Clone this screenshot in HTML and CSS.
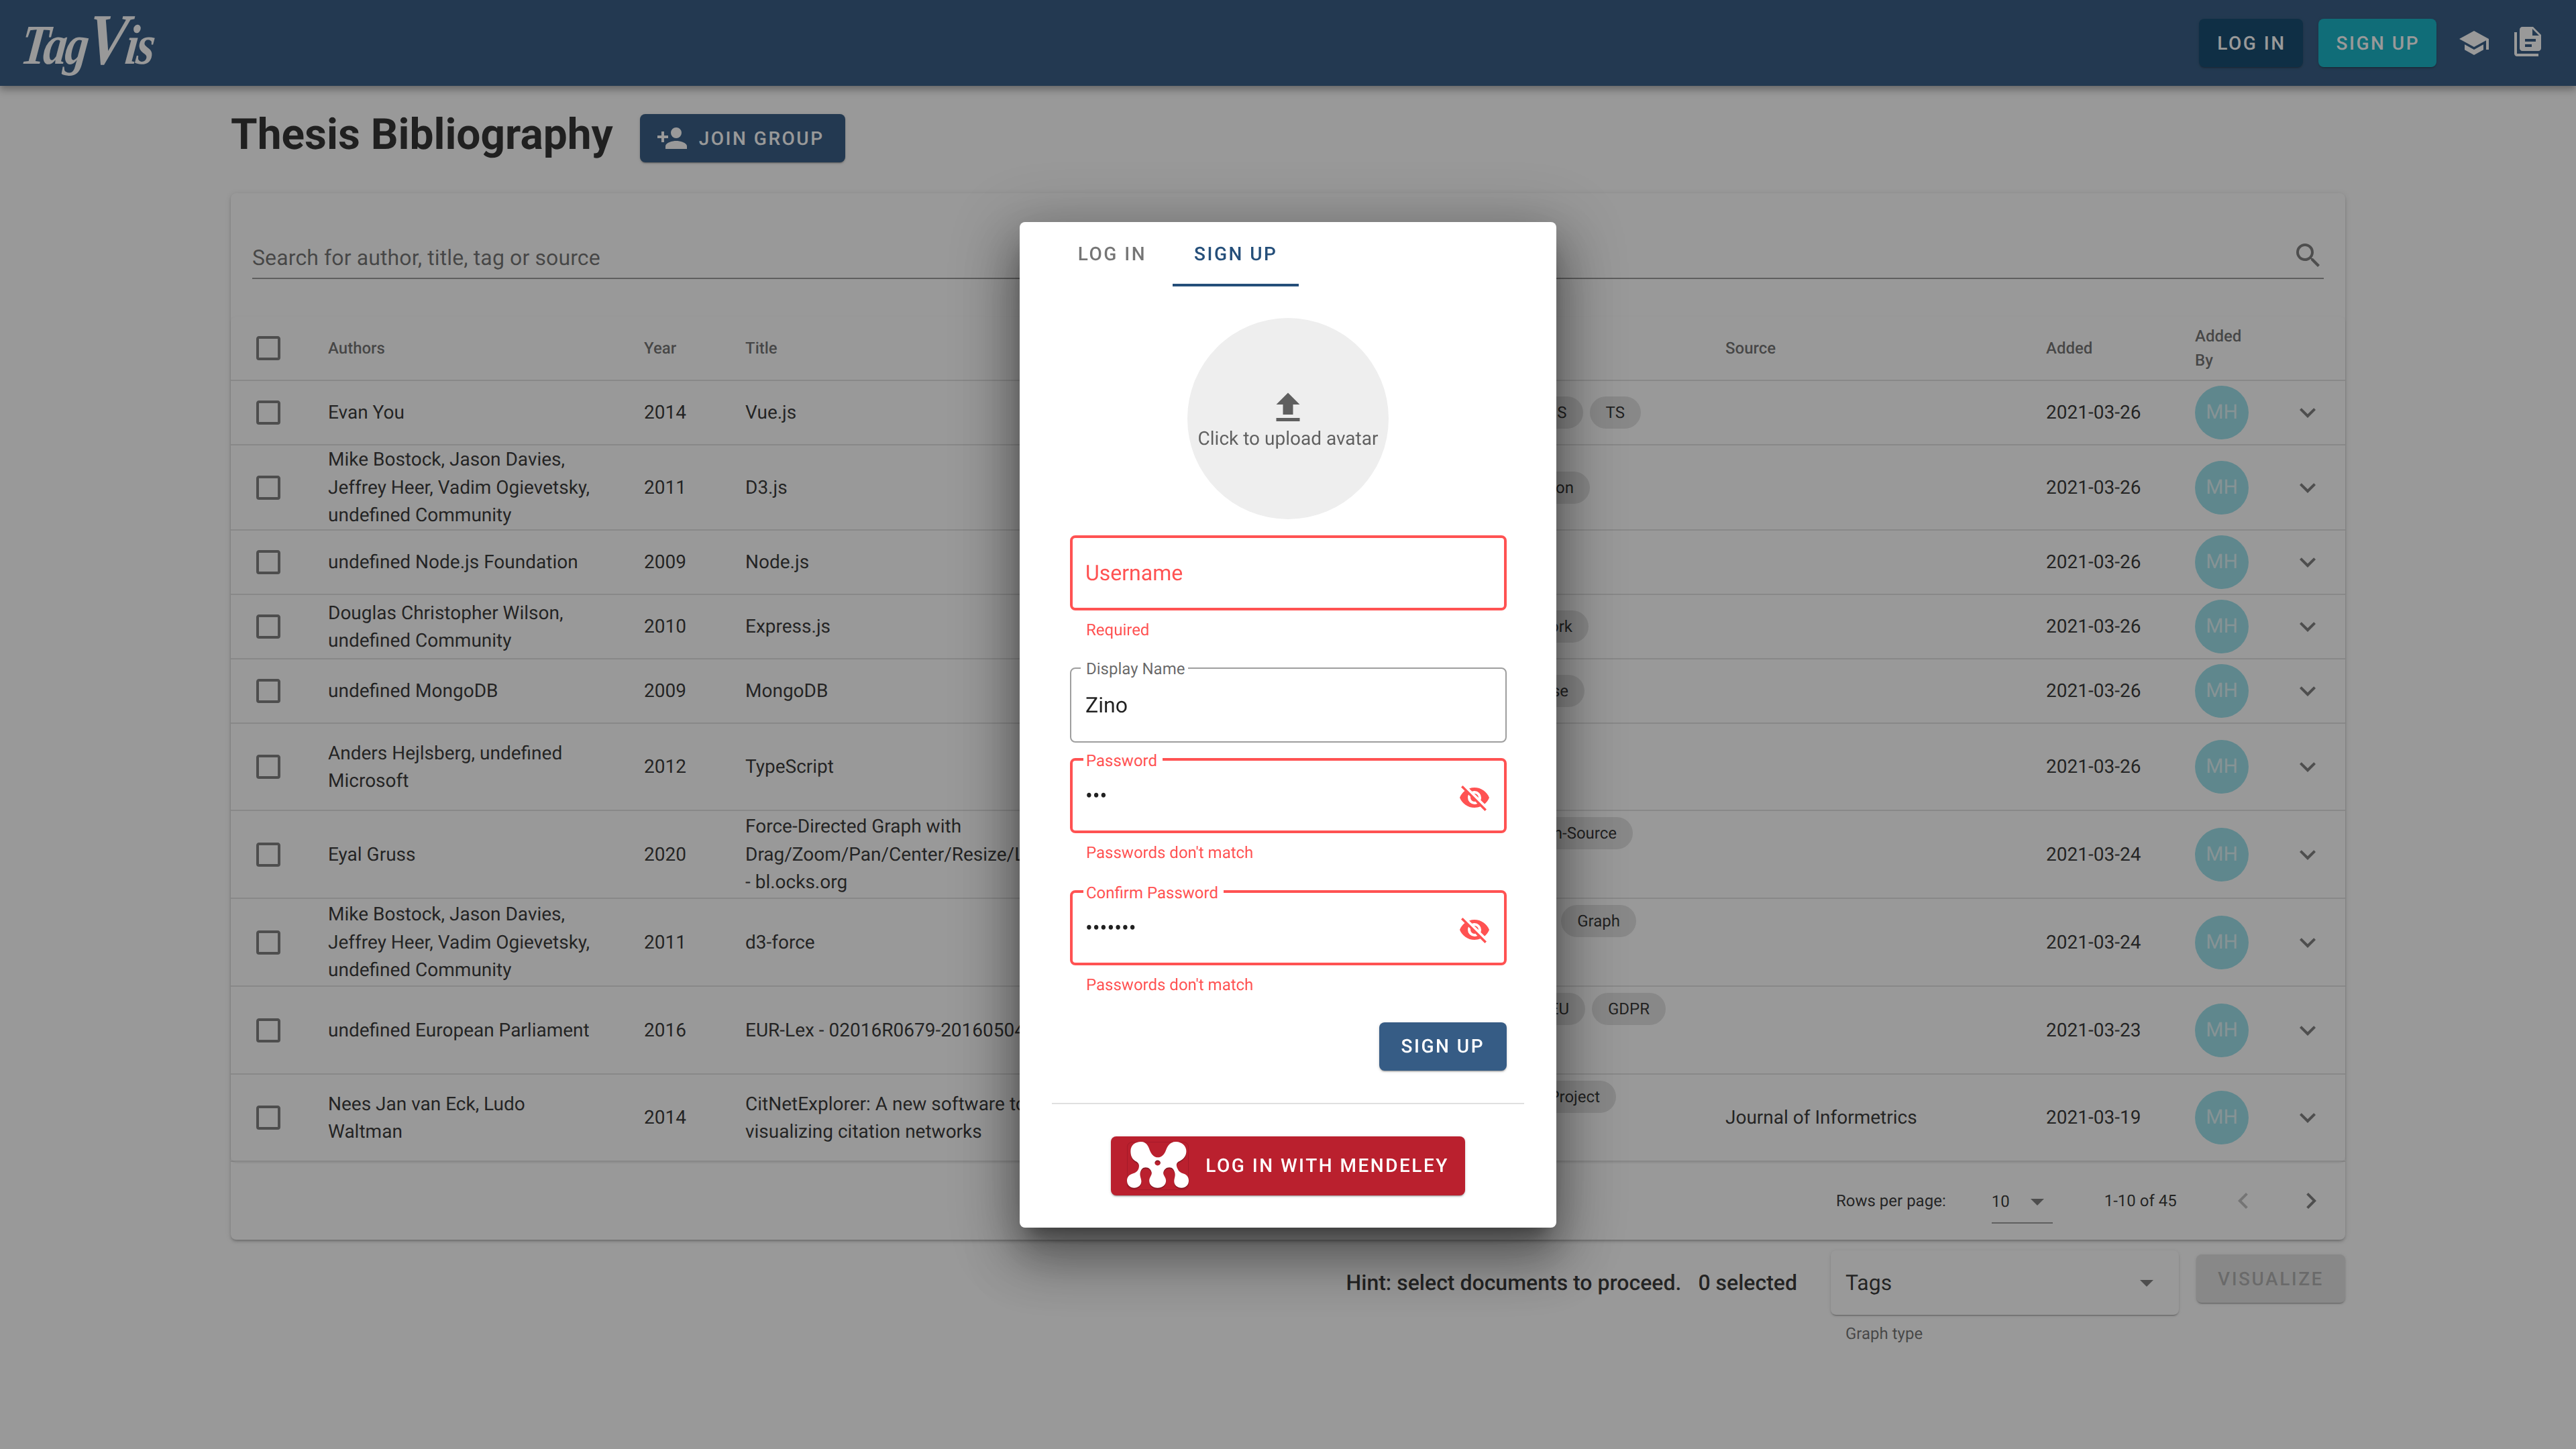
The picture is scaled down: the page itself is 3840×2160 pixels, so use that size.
FILE: index.html
```html
<!DOCTYPE html>
<html lang="en">
<head>
    <meta charset="UTF-8">
    <title>TagVis</title>
    <link rel="stylesheet" href="styles.css">
</head>

<body>
    <header class="app-bar">
        <div class="logo">Tag<span class="logo-v">V</span>is</div>
        <div class="app-bar-actions">
            <button class="btn btn-bar btn-login">Log in</button>
            <button class="btn btn-bar btn-signup">Sign up</button>
            <svg class="icon bar-icon" viewBox="0 0 24 24"><path d="M12,3L1,9L12,15L21,10.09V17H23V9M5,13.18V17.18L12,21L19,17.18V13.18L12,17L5,13.18Z"/></svg>
            <svg class="icon bar-icon" viewBox="0 0 24 24"><path fill-rule="evenodd" d="M16 0H8C6.9 0 6 .9 6 2V16C6 17.1 6.9 18 8 18H20C21.1 18 22 17.1 22 16V6L16 0M15.5 6.5V1.5L20.5 6.5H15.5M18 9V11H10V9H18M15 13V15H10V13H15ZM4 4V20H20V22H4C2.9 22 2 21.1 2 20V4H4Z"/></svg>
        </div>
    </header>

    <main class="page">
        <div class="title-row">
            <h1>Thesis Bibliography</h1>
            <button class="btn btn-primary btn-join">
                <svg class="icon" viewBox="0 0 24 24"><path d="M15,14C12.33,14 7,15.33 7,18V20H23V18C23,15.33 17.67,14 15,14M6,10V7H4V10H1V12H4V15H6V12H9V10M15,12A4,4 0 0,0 19,8A4,4 0 0,0 15,4A4,4 0 0,0 11,8A4,4 0 0,0 15,12Z"/></svg>
                Join group
            </button>
        </div>

        <section class="card">
            <div class="search">
                <span>Search for author, title, tag or source</span>
                <svg class="icon" viewBox="0 0 24 24"><path d="M9.5,3A6.5,6.5 0 0,1 16,9.5C16,11.11 15.41,12.59 14.44,13.73L14.71,14H15.5L20.5,19L19,20.5L14,15.5V14.71L13.73,14.44C12.59,15.41 11.11,16 9.5,16A6.5,6.5 0 0,1 3,9.5A6.5,6.5 0 0,1 9.5,3M9.5,5C7,5 5,7 5,9.5C5,12 7,14 9.5,14C12,14 14,12 14,9.5C14,7 12,5 9.5,5Z"/></svg>
            </div>

            <table class="docs">
                <colgroup>
                    <col class="col-check"><col class="col-authors"><col class="col-year"><col class="col-title"><col class="col-tags"><col class="col-source"><col class="col-added"><col class="col-by"><col class="col-more">
                </colgroup>
                <thead>
                    <tr>
                        <th class="check"><svg class="icon" viewBox="0 0 24 24"><use href="#box"/></svg></th>
                        <th>Authors</th>
                        <th>Year</th>
                        <th>Title</th>
                        <th>Tags</th>
                        <th>Source</th>
                        <th>Added</th>
                        <th>Added By</th>
                        <th></th>
                    </tr>
                </thead>
                <tbody>
                    <tr class="row-s">
                        <td class="check"><svg class="icon" viewBox="0 0 24 24"><use href="#box"/></svg></td>
                        <td class="authors">Evan You</td>
                        <td>2014</td>
                        <td>Vue.js</td>
                        <td><div class="chips end-86"><span class="chip">JS</span><span class="chip">TS</span></div></td>
                        <td></td>
                        <td>2021-03-26</td>
                        <td><div class="avatar">MH</div></td>
                        <td class="more"><svg class="icon" viewBox="0 0 24 24"><use href="#chevron"/></svg></td>
                    </tr>
                    <tr class="row-m">
                        <td class="check"><svg class="icon" viewBox="0 0 24 24"><use href="#box"/></svg></td>
                        <td class="authors">Mike Bostock, Jason Davies, Jeffrey Heer, Vadim Ogievetsky, undefined Community</td>
                        <td>2011</td>
                        <td>D3.js</td>
                        <td><div class="chips end-162"><span class="chip">Visualization</span></div></td>
                        <td></td>
                        <td>2021-03-26</td>
                        <td><div class="avatar">MH</div></td>
                        <td class="more"><svg class="icon" viewBox="0 0 24 24"><use href="#chevron"/></svg></td>
                    </tr>
                    <tr class="row-s">
                        <td class="check"><svg class="icon" viewBox="0 0 24 24"><use href="#box"/></svg></td>
                        <td class="authors">undefined Node.js Foundation</td>
                        <td>2009</td>
                        <td>Node.js</td>
                        <td></td>
                        <td></td>
                        <td>2021-03-26</td>
                        <td><div class="avatar">MH</div></td>
                        <td class="more"><svg class="icon" viewBox="0 0 24 24"><use href="#chevron"/></svg></td>
                    </tr>
                    <tr class="row-s">
                        <td class="check"><svg class="icon" viewBox="0 0 24 24"><use href="#box"/></svg></td>
                        <td class="authors">Douglas Christopher Wilson, undefined Community</td>
                        <td>2010</td>
                        <td>Express.js</td>
                        <td><div class="chips end-164"><span class="chip">Framework</span></div></td>
                        <td></td>
                        <td>2021-03-26</td>
                        <td><div class="avatar">MH</div></td>
                        <td class="more"><svg class="icon" viewBox="0 0 24 24"><use href="#chevron"/></svg></td>
                    </tr>
                    <tr class="row-s">
                        <td class="check"><svg class="icon" viewBox="0 0 24 24"><use href="#box"/></svg></td>
                        <td class="authors">undefined MongoDB</td>
                        <td>2009</td>
                        <td>MongoDB</td>
                        <td><div class="chips end-170"><span class="chip">Database</span></div></td>
                        <td></td>
                        <td>2021-03-26</td>
                        <td><div class="avatar">MH</div></td>
                        <td class="more"><svg class="icon" viewBox="0 0 24 24"><use href="#chevron"/></svg></td>
                    </tr>
                    <tr class="row-l">
                        <td class="check"><svg class="icon" viewBox="0 0 24 24"><use href="#box"/></svg></td>
                        <td class="authors">Anders Hejlsberg, undefined Microsoft</td>
                        <td>2012</td>
                        <td>TypeScript</td>
                        <td></td>
                        <td></td>
                        <td>2021-03-26</td>
                        <td><div class="avatar">MH</div></td>
                        <td class="more"><svg class="icon" viewBox="0 0 24 24"><use href="#chevron"/></svg></td>
                    </tr>
                    <tr class="row-xl">
                        <td class="check"><svg class="icon" viewBox="0 0 24 24"><use href="#box"/></svg></td>
                        <td class="authors">Eyal Gruss</td>
                        <td>2020</td>
                        <td>Force-Directed Graph with Drag/Zoom/Pan/Center/Resize/Labels/Legend <span class="nowrap">- bl.ocks.org</span></td>
                        <td class="tags-top"><div class="chips end-98"><span class="chip">Open-Source</span></div></td>
                        <td></td>
                        <td>2021-03-24</td>
                        <td><div class="avatar">MH</div></td>
                        <td class="more"><svg class="icon" viewBox="0 0 24 24"><use href="#chevron"/></svg></td>
                    </tr>
                    <tr class="row-xl">
                        <td class="check"><svg class="icon" viewBox="0 0 24 24"><use href="#box"/></svg></td>
                        <td class="authors">Mike Bostock, Jason Davies, Jeffrey Heer, Vadim Ogievetsky, undefined Community</td>
                        <td>2011</td>
                        <td>d3-force</td>
                        <td class="tags-top"><div class="chips end-93"><span class="chip">Graph</span></div></td>
                        <td></td>
                        <td>2021-03-24</td>
                        <td><div class="avatar">MH</div></td>
                        <td class="more"><svg class="icon" viewBox="0 0 24 24"><use href="#chevron"/></svg></td>
                    </tr>
                    <tr class="row-xl">
                        <td class="check"><svg class="icon" viewBox="0 0 24 24"><use href="#box"/></svg></td>
                        <td class="authors">undefined European Parliament</td>
                        <td>2016</td>
                        <td>EUR-Lex - 02016R0679-20160504 - EN - EUR-Lex</td>
                        <td class="tags-top"><div class="chips end-49"><span class="chip">EU</span><span class="chip">GDPR</span></div></td>
                        <td></td>
                        <td>2021-03-23</td>
                        <td><div class="avatar">MH</div></td>
                        <td class="more"><svg class="icon" viewBox="0 0 24 24"><use href="#chevron"/></svg></td>
                    </tr>
                    <tr class="row-l">
                        <td class="check"><svg class="icon" viewBox="0 0 24 24"><use href="#box"/></svg></td>
                        <td class="authors">Nees Jan van Eck, Ludo Waltman</td>
                        <td>2014</td>
                        <td>CitNetExplorer: A new software tool for analyzing and visualizing citation networks</td>
                        <td class="tags-top"><div class="chips end-123"><span class="chip">Project</span></div></td>
                        <td>Journal of Informetrics</td>
                        <td>2021-03-19</td>
                        <td><div class="avatar">MH</div></td>
                        <td class="more"><svg class="icon" viewBox="0 0 24 24"><use href="#chevron"/></svg></td>
                    </tr>
                </tbody>
            </table>

            <div class="pager">
                <span>Rows per page:</span>
                <div class="pager-select">
                    <span>10</span>
                    <svg class="icon" viewBox="0 0 24 24"><path d="M7,10L12,15L17,10H7Z"/></svg>
                </div>
                <span class="pager-range">1-10 of 45</span>
                <svg class="icon pager-prev" viewBox="0 0 24 24"><path d="M15.41,16.58L10.83,12L15.41,7.41L14,6L8,12L14,18L15.41,16.58Z"/></svg>
                <svg class="icon pager-next" viewBox="0 0 24 24"><path d="M8.59,16.58L13.17,12L8.59,7.41L10,6L16,12L10,18L8.59,16.58Z"/></svg>
            </div>
        </section>

        <div class="actions">
            <p class="hint">Hint: select documents to proceed.</p>
            <p class="selected">0 selected</p>
            <div class="graph-type">
                <div class="select-box">
                    <span>Tags</span>
                    <svg class="icon" viewBox="0 0 24 24"><path d="M7,10L12,15L17,10H7Z"/></svg>
                </div>
                <p class="select-hint">Graph type</p>
            </div>
            <button class="btn btn-visualize">Visualize</button>
        </div>
    </main>

    <div class="overlay">
        <div class="dialog">
            <div class="tabs">
                <div class="tab">Log in</div>
                <div class="tab tab-active">Sign up</div>
            </div>

            <div class="upload">
                <svg class="icon" viewBox="0 0 24 24"><path d="M9,16V10H5L12,3L19,10H15V16H9M5,20V18H19V20H5Z"/></svg>
                <span>Click to upload avatar</span>
            </div>

            <form class="signup-form">
                <div class="field field-error">
                    <span class="field-placeholder">Username</span>
                </div>
                <p class="field-detail">Required</p>

                <div class="field field-plain">
                    <label class="field-label">Display Name</label>
                    <input type="text" value="Zino">
                </div>

                <div class="field field-error">
                    <label class="field-label">Password</label>
                    <input type="password" value="abc">
                    <svg class="icon eye" viewBox="0 0 24 24"><use href="#eye-off"/></svg>
                </div>
                <p class="field-detail">Passwords don't match</p>

                <div class="field field-error">
                    <label class="field-label">Confirm Password</label>
                    <input type="password" value="abcdefg">
                    <svg class="icon eye" viewBox="0 0 24 24"><use href="#eye-off"/></svg>
                </div>
                <p class="field-detail">Passwords don't match</p>

                <div class="form-submit">
                    <button type="button" class="btn btn-submit">Sign up</button>
                </div>
            </form>

            <hr class="dialog-divider">

            <div class="mendeley-row">
                <button class="btn btn-mendeley">
                    <svg class="mendeley-logo" viewBox="0 0 258 217" preserveAspectRatio="none">
                        <rect x="1" y="1" width="256" height="215" rx="22" class="mendeley-box"/>
                        <path fill-rule="evenodd" class="mendeley-mark" d="M15 42C15 15 35 0 58 0C85 0 90 25 98 45C105 60 115 70 129 70C143 70 153 60 160 45C168 25 175 0 205 0C230 0 248 20 248 42C248 65 235 80 215 90C205 97 205 108 212 122C218 138 230 140 240 145C252 150 258 162 258 175C258 195 245 207 228 207C210 207 197 195 197 178C197 165 203 155 200 140C197 125 190 115 177 115C163 115 155 125 152 138C150 150 163 160 163 175C163 195 148 207 128 207C108 207 93 195 93 175C93 160 105 150 103 138C100 125 92 115 78 115C65 115 58 125 55 140C53 155 60 165 60 178C60 195 47 207 30 207C13 207 0 195 0 175C0 160 8 150 20 145C30 140 42 138 48 122C53 108 50 97 40 90C22 80 15 65 15 42ZM128 83A12 12 0 1 0 128 107A12 12 0 1 0 128 83Z"/>
                    </svg>
                    Log in with Mendeley
                </button>
            </div>
        </div>
    </div>

    <svg class="icon-defs" aria-hidden="true">
        <defs>
            <path id="box" d="M19,3H5C3.89,3 3,3.89 3,5V19A2,2 0 0,0 5,21H19A2,2 0 0,0 21,19V5C21,3.89 20.1,3 19,3M19,5V19H5V5H19Z"/>
            <path id="chevron" d="M7.41,8.58L12,13.17L16.59,8.58L18,10L12,16L6,10L7.41,8.58Z"/>
            <path id="eye-off" d="M11.83,9L15,12.16C15,12.11 15,12.05 15,12A3,3 0 0,0 12,9C11.94,9 11.89,9 11.83,9M7.53,9.8L9.08,11.35C9.03,11.56 9,11.77 9,12A3,3 0 0,0 12,15C12.22,15 12.44,14.97 12.65,14.92L14.2,16.47C13.53,16.8 12.79,17 12,17A5,5 0 0,1 7,12C7,11.21 7.2,10.47 7.53,9.8M2,4.27L4.28,6.55L4.73,7C3.08,8.3 1.78,10 1,12C2.73,16.39 7,19.5 12,19.5C13.55,19.5 15.03,19.2 16.38,18.66L16.81,19.08L19.73,22L21,20.73L3.27,3M12,7A5,5 0 0,1 17,12C17,12.64 16.87,13.26 16.64,13.82L19.57,16.75C21.07,15.5 22.27,13.86 23,12C21.27,7.61 17,4.5 12,4.5C10.6,4.5 9.26,4.75 8,5.2L10.17,7.35C10.74,7.13 11.35,7 12,7Z"/>
        </defs>
    </svg>
</body>
</html>
```

FILE: styles.css
```css
* {
    box-sizing: border-box;
    margin: 0;
    padding: 0;
}

html,
body {
    height: 100%;
}

body {
    background: #fff;
    font-family: Roboto, 'Noto Sans', sans-serif;
    color: rgba(0, 0, 0, 0.87);
    overflow: hidden;
    text-rendering: geometricPrecision;
}

.icon {
    display: block;
    flex: none;
    width: 48px;
    height: 48px;
    fill: currentColor;
}

.icon-defs {
    position: absolute;
    width: 0;
    height: 0;
}

.nowrap {
    white-space: nowrap;
}

/* buttons */

.btn {
    display: inline-flex;
    align-items: center;
    height: 72px;
    padding: 0 32px;
    border: none;
    border-radius: 8px;
    font-family: inherit;
    font-size: 28px;
    font-weight: 500;
    letter-spacing: 2.5px;
    text-transform: uppercase;
    text-rendering: geometricPrecision;
    color: #fff;
    box-shadow: 0 3px 1px -2px rgba(0, 0, 0, 0.2), 0 2px 2px 0 rgba(0, 0, 0, 0.14), 0 1px 5px 0 rgba(0, 0, 0, 0.12);
}

.btn-bar {
    padding: 0 25px 0 27px;
}

.btn-login {
    background: #003b64;
}

.btn-signup {
    margin-left: 23px;
    background: #02aec2;
}

.btn-primary {
    background: #254f7a;
}

/* top bar */

.app-bar {
    position: relative;
    display: flex;
    justify-content: space-between;
    align-items: center;
    height: 128px;
    padding: 0 48px 0 32px;
    background: #254f7a;
    color: #fff;
    box-shadow: 0 4px 8px -2px rgba(0, 0, 0, 0.2), 0 8px 10px 1px rgba(0, 0, 0, 0.14), 0 2px 14px 1px rgba(0, 0, 0, 0.12);
}

.logo {
    margin-top: 6px;
    font-family: 'Liberation Serif', serif;
    font-style: italic;
    font-weight: 700;
    font-size: 84px;
    letter-spacing: -3px;
    transform: scaleX(0.83) skewX(-8deg);
    transform-origin: left center;
}

.logo-v {
    font-size: 108px;
    line-height: 84px;
}

.app-bar-actions {
    display: flex;
    align-items: center;
}

.bar-icon {
    margin-left: 32px;
}

/* page */

.page {
    padding: 42px 344px 0;
}

.title-row {
    display: flex;
    align-items: center;
    gap: 40px;
    margin-bottom: 46px;
}

h1 {
    font-size: 64px;
    font-weight: 700;
    line-height: 60px;
    margin-top: -10px;
}

.btn-join {
    padding: 0 31px 0 24px;
}

.btn-join .icon {
    margin-right: 16px;
}

.card {
    display: flow-root;
    border-radius: 8px;
    background: #fff;
    box-shadow: 0 3px 3px -2px rgba(0, 0, 0, 0.2), 0 3px 4px 0 rgba(0, 0, 0, 0.14), 0 1px 8px 0 rgba(0, 0, 0, 0.12);
}

.search {
    display: flex;
    justify-content: space-between;
    align-items: center;
    height: 64px;
    margin: 64px 32px 0;
    border-bottom: 2px solid rgba(0, 0, 0, 0.42);
    font-size: 32px;
    letter-spacing: 0.12px;
    color: rgba(0, 0, 0, 0.6);
}

.search span {
    padding-top: 1px;
}

.search .icon {
    margin-right: -1px;
    margin-top: -4px;
    color: rgba(0, 0, 0, 0.54);
}

/* table */

.docs {
    width: 100%;
    margin-top: 56px;
    table-layout: fixed;
    border-collapse: separate;
    border-spacing: 0;
    font-size: 28px;
    line-height: 41.5px;
    border-radius: 8px;
    box-shadow: 0 1px 3px 0 rgba(0, 0, 0, 0.12);
}

.col-check { width: 145px; }
.col-authors { width: 471px; }
.col-year { width: 151px; }
.col-title { width: 740px; }
.col-tags { width: 721px; }
.col-source { width: 478px; }
.col-added { width: 222px; }
.col-by { width: 120px; }
.col-more { width: 104px; }

.docs th,
.docs td {
    padding: 0 40px 0 0;
    border-bottom: 2px solid rgba(0, 0, 0, 0.12);
    vertical-align: middle;
    text-align: left;
}

.docs th {
    height: 96px;
    font-size: 24px;
    font-weight: 500;
    line-height: 36px;
    color: rgba(0, 0, 0, 0.6);
}

.docs .authors {
    padding-right: 65px;
}

.docs .check {
    padding: 0 0 0 32px;
    color: rgba(0, 0, 0, 0.54);
}

.docs .more {
    padding: 0 8px 0 0;
    color: rgba(0, 0, 0, 0.54);
}

.more .icon {
    margin: 0 auto;
}

.row-s td { height: 96px; }
.row-m td { height: 127px; }
.row-l td { height: 130px; }
.row-xl td { height: 131px; }

.chips {
    display: flex;
    justify-content: flex-end;
    gap: 10px;
}

.end-49 { padding-right: 49px; }
.end-86 { padding-right: 86px; }
.end-93 { padding-right: 93px; }
.end-98 { padding-right: 98px; }
.end-123 { padding-right: 123px; }
.end-162 { padding-right: 162px; }
.end-164 { padding-right: 164px; }
.end-170 { padding-right: 170px; }

.docs .tags-top {
    vertical-align: top;
    padding-top: 9px;
}

.chip {
    height: 48px;
    padding: 0 24px;
    border-radius: 24px;
    background: #e0e0e0;
    font-size: 24px;
    line-height: 48px;
    white-space: nowrap;
}

.avatar {
    display: flex;
    justify-content: center;
    align-items: center;
    width: 80px;
    height: 80px;
    border-radius: 50%;
    background: #94dee9;
    font-size: 30px;
    color: rgba(255, 255, 255, 0.7);
}

.pager {
    display: flex;
    align-items: center;
    height: 116px;
    padding-left: 2393px;
    font-size: 24px;
}

.pager-select {
    display: flex;
    justify-content: space-between;
    align-items: center;
    width: 91px;
    height: 64px;
    margin-left: 68px;
    border-bottom: 2px solid rgba(0, 0, 0, 0.42);
    position: relative;
    top: 2px;
}

.pager-select .icon {
    margin-right: -1px;
    color: rgba(0, 0, 0, 0.54);
}

.pager-range {
    margin-left: 77px;
}

.pager-prev {
    margin-left: 75px;
    color: rgba(0, 0, 0, 0.26);
}

.pager-next {
    margin-left: 53px;
    color: rgba(0, 0, 0, 0.54);
}

/* row below the table */

.actions {
    display: flex;
    justify-content: flex-end;
    align-items: flex-start;
    margin-top: 16px;
    font-size: 32px;
}

.hint,
.selected {
    font-weight: 500;
    line-height: 96px;
}

.selected {
    margin-left: 25px;
}

.graph-type {
    width: 519px;
    margin-left: 50px;
}

.select-box {
    display: flex;
    justify-content: space-between;
    align-items: center;
    height: 96px;
    padding: 0 24px 0 22px;
    border-radius: 8px;
    background: #fff;
    box-shadow: 0 3px 1px -2px rgba(0, 0, 0, 0.2), 0 2px 2px 0 rgba(0, 0, 0, 0.14), 0 1px 5px 0 rgba(0, 0, 0, 0.12);
}

.select-box .icon {
    color: rgba(0, 0, 0, 0.54);
}

.select-hint {
    padding: 12px 22px 0;
    font-size: 24px;
    line-height: 32px;
    color: rgba(0, 0, 0, 0.6);
}

.btn-visualize {
    justify-content: center;
    width: 222px;
    margin: 6px 0 0 26px;
    background: #e0e0e0;
    color: rgba(0, 0, 0, 0.26);
}

/* sign up dialog */

.overlay {
    position: fixed;
    inset: 0;
    display: flex;
    justify-content: center;
    align-items: center;
    background: rgba(33, 33, 33, 0.46);
}

.dialog {
    width: 800px;
    border-radius: 8px;
    background: #fff;
    box-shadow: 0 22px 28px -14px rgba(0, 0, 0, 0.4), 0 48px 76px 6px rgba(0, 0, 0, 0.28), 0 18px 92px 16px rgba(0, 0, 0, 0.24);
}

.tabs {
    display: flex;
    padding-left: 48px;
}

.tab {
    min-width: 180px;
    padding: 0 32px;
    font-size: 28px;
    font-weight: 500;
    letter-spacing: 2.5px;
    line-height: 96px;
    text-align: center;
    text-transform: uppercase;
    color: rgba(0, 0, 0, 0.54);
}

.tab-active {
    color: #254f7a;
    box-shadow: inset 0 -4px 0 #254f7a;
}

.upload {
    display: flex;
    flex-direction: column;
    justify-content: center;
    align-items: center;
    width: 300px;
    height: 300px;
    margin: 47px auto 24px;
    border-radius: 50%;
    background: #eee;
    font-size: 28px;
    line-height: 32px;
    color: rgba(0, 0, 0, 0.6);
}

.upload .icon {
    width: 60px;
    height: 60px;
}

.signup-form {
    padding: 0 74px 0 75px;
}

.field {
    position: relative;
    display: flex;
    align-items: center;
    height: 112px;
    margin-bottom: 23px;
    border-radius: 8px;
    font-size: 32px;
}

.field-plain {
    padding: 0 21px;
    border: 2px solid rgba(0, 0, 0, 0.38);
}

.field-error {
    padding: 0 20px 0 19px;
    border: 4px solid #ff5252;
    margin-bottom: 0;
    color: #ff5252;
}

.field input {
    flex: 1;
    min-width: 0;
    border: none;
    outline: none;
    background: none;
    font-family: inherit;
    font-size: 32px;
    text-rendering: geometricPrecision;
    color: rgba(0, 0, 0, 0.87);
}

.eye {
    margin-top: 6px;
}

.field-label {
    position: absolute;
    left: 14px;
    top: -16px;
    padding: 0 5px 0 8px;
    background: #fff;
    font-size: 24px;
    line-height: 32px;
    color: rgba(0, 0, 0, 0.6);
}

.field-error .field-label {
    left: 16px;
    padding: 0 8px 0 4px;
    color: #ff5252;
}

.field-detail {
    height: 85px;
    padding: 13px 24px 0;
    font-size: 24px;
    line-height: 32px;
    color: #ff5252;
}

.form-submit {
    display: flex;
    justify-content: flex-end;
}

.btn-submit {
    padding: 0 33px;
    background: #365c85;
}

.dialog-divider {
    height: 2px;
    margin: 48px 48px;
    border: none;
    background: rgba(0, 0, 0, 0.12);
}

.mendeley-row {
    display: flex;
    justify-content: center;
    padding-bottom: 48px;
}

.btn-mendeley {
    height: 88px;
    padding: 0 24px;
    background: #ba202e;
}

.mendeley-logo {
    width: 92px;
    height: 72px;
    margin-right: 25px;
}

.mendeley-box {
    fill: none;
    stroke: rgba(90, 10, 20, 0.35);
    stroke-width: 2;
}

.mendeley-mark {
    fill: #fff;
    filter: drop-shadow(0 5px 1px rgba(110, 15, 25, 0.75));
}
```
